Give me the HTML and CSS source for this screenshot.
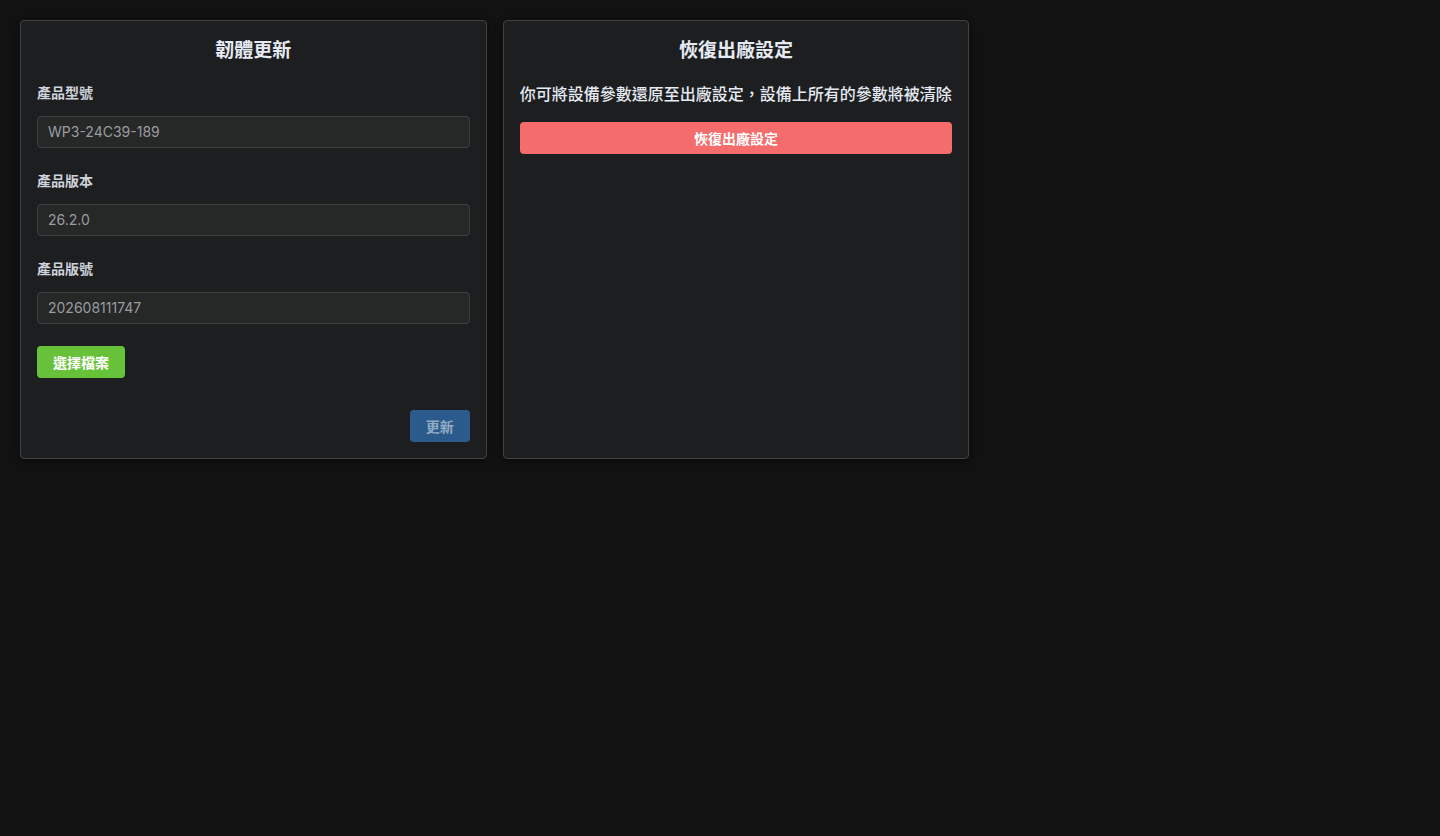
FILE: index.html
```html
<!DOCTYPE html>
<html lang="zh-Hant">
<head>
<meta charset="utf-8">
<title>設定</title>
<link rel="stylesheet" href="styles.css">
</head>
<body>
<main class="page">
  <section class="card">
    <h2 class="card-title">韌體更新</h2>
    <div class="field">
      <label class="field-label">產品型號</label>
      <div class="input">WP3-24C39-189</div>
    </div>
    <div class="field">
      <label class="field-label">產品版本</label>
      <div class="input">26.2.0</div>
    </div>
    <div class="field field-last">
      <label class="field-label">產品版號</label>
      <div class="input">202608111747</div>
    </div>
    <button class="btn btn-success">選擇檔案</button>
    <div class="actions">
      <button class="btn btn-primary-disabled">更新</button>
    </div>
  </section>
  <section class="card">
    <h2 class="card-title">恢復出廠設定</h2>
    <p class="desc">你可將設備參數還原至出廠設定，設備上所有的參數將被清除</p>
    <button class="btn btn-danger btn-block">恢復出廠設定</button>
  </section>
</main>
</body>
</html>
```

FILE: styles.css
```css
* { box-sizing: border-box; }
html, body { margin: 0; padding: 0; }
body {
  background: #121212;
  color: #e5eaf3;
  font-family: "Inter", "Noto Sans CJK TC", sans-serif;
  width: 1440px;
  height: 836px;
}
.page {
  padding: 20px;
  display: grid;
  grid-template-columns: 466.67px 466.67px;
  column-gap: 16px;
  align-items: start;
}
.card {
  background: #1d1e20;
  border: 1px solid #414243;
  border-radius: 4px;
  box-shadow: 0 2px 8px rgba(0, 0, 0, 0.45);
  padding: 16px;
  height: 439px;
}
.card-title {
  margin: 0 0 18px;
  text-align: center;
  font-size: 19px;
  font-weight: 700;
  line-height: 28px;
  color: #e5eaf3;
}
.field { margin-bottom: 23px; }
.field-last { margin-bottom: 22px; }
.field-label {
  display: block;
  font-size: 14px;
  font-weight: 700;
  line-height: 20px;
  color: #cfd3dc;
  margin-bottom: 13px;
}
.input {
  height: 32px;
  border: 1px solid #3e3f41;
  border-radius: 4px;
  background: #262727;
  color: #9a9ca1;
  font-size: 14px;
  line-height: 30px;
  padding: 0 10px;
  font-family: "Inter", "Noto Sans CJK TC", sans-serif;
}
.btn {
  display: inline-flex;
  align-items: center;
  justify-content: center;
  height: 32px;
  border: none;
  border-radius: 4px;
  font-size: 14px;
  font-weight: 700;
  padding: 0 16px;
  color: #ffffff;
  font-family: "Inter", "Noto Sans CJK TC", sans-serif;
  cursor: pointer;
}
.btn-success { background: #67c23a; width: 88px; }
.actions {
  display: flex;
  justify-content: flex-end;
  margin-top: 32px;
}
.btn-primary-disabled {
  background: #2b5b8c;
  color: #94abc4;
  width: 60px;
}
.desc {
  margin: 0 0 17px;
  font-size: 16px;
  font-weight: 500;
  line-height: 22px;
  color: #e5eaf3;
  white-space: nowrap;
}
.btn-block { display: flex; width: 100%; }
.btn-danger { background: #f56c6c; }
```
